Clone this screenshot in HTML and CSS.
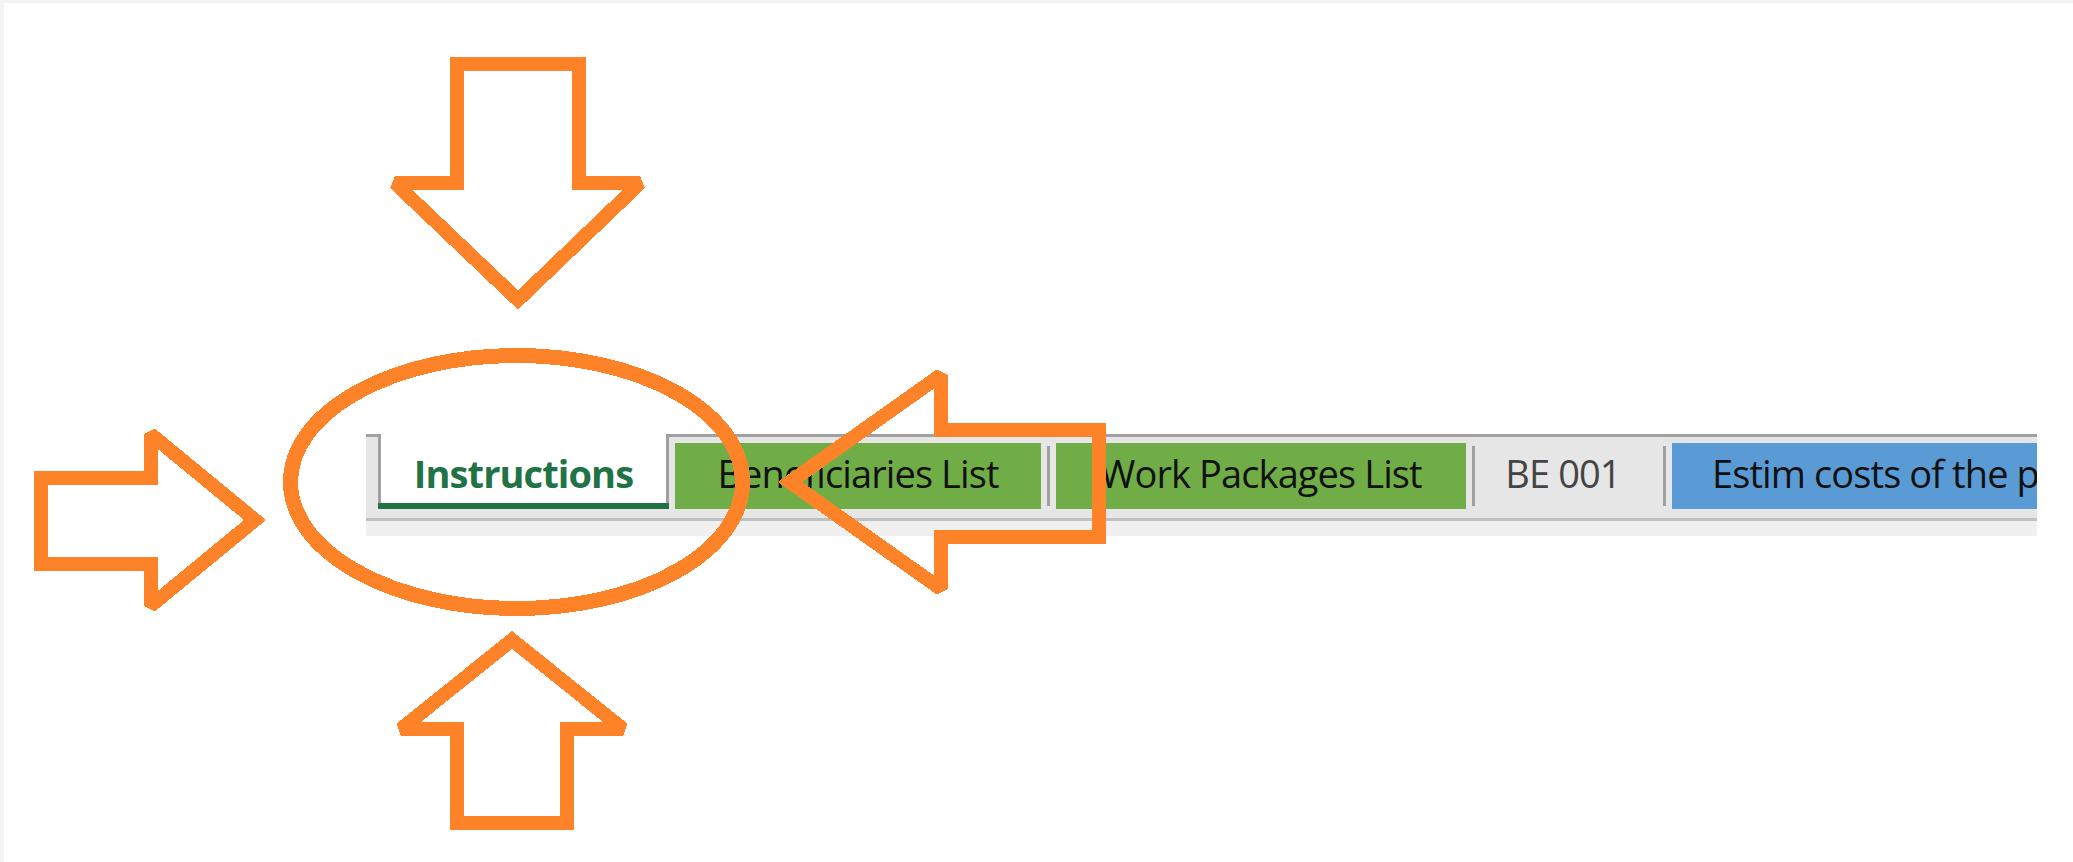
FILE: index.html
```html
<!DOCTYPE html>
<html lang="en">
<head>
<meta charset="utf-8">
<title>Workbook sheets</title>
<link rel="stylesheet" href="styles.css">
</head>
<body>
  <div class="page">
    <div class="sheet-bar">
      <div class="sheet-tabs">
        <div class="tab tab--active">
          <span class="tab__label">Instructions</span>
          <span class="tab__underline"></span>
        </div>
        <div class="tab tab--sheet tab--green tab--beneficiaries">Beneficiaries List</div>
        <div class="tab-sep"></div>
        <div class="tab tab--sheet tab--green tab--packages">Work Packages List</div>
        <div class="tab-sep"></div>
        <div class="tab tab--sheet tab--plain">BE 001</div>
        <div class="tab-sep"></div>
        <div class="tab tab--sheet tab--blue">Estim costs of the project</div>
      </div>
      <div class="sheet-bar__foot"></div>
    </div>
  </div>

  <!-- hand-drawn callouts around the first sheet tab -->
  <svg class="callouts" viewBox="0 0 2073 862" xmlns="http://www.w3.org/2000/svg">
    <g fill="none" stroke="#fe8228" stroke-width="14" stroke-linejoin="miter" stroke-miterlimit="2" shape-rendering="crispEdges">
      <polygon points="456.5,64 578.5,64 578.5,183 640,183 518,300 395,183 456.5,183"/>
      <polygon points="40.5,477.5 150.5,477.5 150.5,434 255,520 150.5,606 150.5,563.5 40.5,563.5"/>
      <polygon points="1099,430 941,430 941,375 790,482 941,589 941,537 1099,537"/>
      <polygon points="456.5,822.5 456.5,729 401,729 512,640 623,729 566.5,729 566.5,822.5"/>
      <ellipse cx="516.5" cy="482" rx="226" ry="126.5" stroke-width="15"/>
    </g>
  </svg>
</body>
</html>
```

FILE: styles.css
```css
html,
body {
  margin: 0;
  height: 100%;
}

body {
  position: relative;
  overflow: hidden;
  background: #f3f3f3;
  font-family: "Open Sans", "Noto Sans", sans-serif;
}

.page {
  box-sizing: border-box;
  height: 859px;
  margin: 3px 0 0 4px;
  padding-top: 431px;
  background: #ffffff;
}

/* sheet tab strip */
.sheet-bar {
  width: 1671px;
  margin-left: 362px;
}

.sheet-tabs {
  display: flex;
  align-items: flex-start;
  gap: 6px;
  height: 81px;
  padding-left: 12px;
  border-top: 3px solid #a0a0a0;
  border-bottom: 3px solid #c0c0c0;
  background: #e6e6e6;
}

.sheet-bar__foot {
  height: 15px;
  background: #f0f0f0;
}

.tab {
  flex: none;
  box-sizing: border-box;
  white-space: nowrap;
  text-align: center;
  font-size: 38px;
  line-height: 60px;
  letter-spacing: -0.9px;
}

.tab--active {
  display: flex;
  flex-direction: column;
  width: 291px;
  margin-top: -3px;
}

.tab__label {
  display: block;
  box-sizing: border-box;
  height: 69px;
  padding-top: 9px;
  border-left: 3px solid #a0a0a0;
  border-right: 3px solid #a0a0a0;
  background: #ffffff;
  color: #217346;
  font-weight: 700;
}

.tab__underline {
  display: block;
  height: 6px;
  background: #217346;
}

.tab--sheet {
  height: 66px;
  margin-top: 6px;
  padding-bottom: 6px;
  color: #111111;
}

.tab--green {
  background: #70ad47;
}

.tab--beneficiaries {
  width: 366px;
}

.tab--packages {
  width: 410px;
}

.tab--plain {
  width: 176px;
  padding-right: 12px;
  color: #444444;
}

.tab--blue {
  width: 365px;
  overflow: hidden;
  padding-left: 40px;
  text-align: left;
  background: #5b9bd5;
}

.tab-sep {
  flex: none;
  width: 3px;
  height: 60px;
  margin-top: 9px;
  background: #a0a0a0;
}

/* annotation layer */
.callouts {
  position: absolute;
  left: 0;
  top: 0;
  width: 2073px;
  height: 862px;
  pointer-events: none;
}
```
